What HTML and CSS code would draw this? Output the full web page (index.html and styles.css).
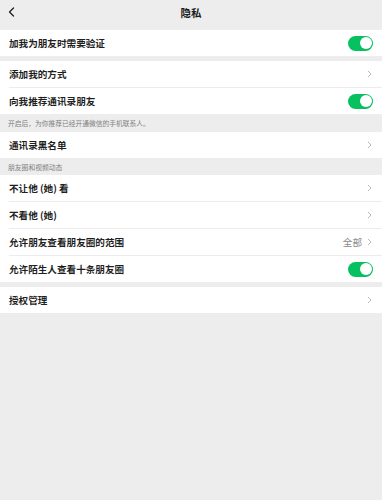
FILE: index.html
```html
<!DOCTYPE html>
<html lang="zh-CN">
<head>
<meta charset="utf-8">
<title>隐私</title>
<link rel="stylesheet" href="styles.css">
</head>
<body>
<header class="nav">
  <span class="back"><svg width="7" height="10" viewBox="0 0 7 10"><path d="M5.5 1 L1.5 5 L5.5 9" fill="none" stroke="#1a1a1a" stroke-width="1.2" stroke-linecap="round" stroke-linejoin="round"/></svg></span>
  <span class="title">隐私</span>
  <span></span>
</header>

<section class="group">
  <div class="row"><span class="label">加我为朋友时需要验证</span><span class="switch"><span class="knob"></span></span></div>
</section>

<div class="gap"></div>

<section class="group">
  <div class="row"><span class="label">添加我的方式</span><span class="chev"><svg width="5" height="8" viewBox="0 0 5 8"><path d="M1 1 L4 4 L1 7" fill="none" stroke="#b8b8b8" stroke-width="1"/></svg></span></div>
  <div class="row sep"><span class="label">向我推荐通讯录朋友</span><span class="switch"><span class="knob"></span></span></div>
</section>
<p class="note">开启后，为你推荐已经开通微信的手机联系人。</p>

<section class="group">
  <div class="row"><span class="label">通讯录黑名单</span><span class="chev"><svg width="5" height="8" viewBox="0 0 5 8"><path d="M1 1 L4 4 L1 7" fill="none" stroke="#b8b8b8" stroke-width="1"/></svg></span></div>
</section>
<p class="head">朋友圈和视频动态</p>

<section class="group">
  <div class="row"><span class="label">不让他 (她) 看</span><span class="chev"><svg width="5" height="8" viewBox="0 0 5 8"><path d="M1 1 L4 4 L1 7" fill="none" stroke="#b8b8b8" stroke-width="1"/></svg></span></div>
  <div class="row sep"><span class="label">不看他 (她)</span><span class="chev"><svg width="5" height="8" viewBox="0 0 5 8"><path d="M1 1 L4 4 L1 7" fill="none" stroke="#b8b8b8" stroke-width="1"/></svg></span></div>
  <div class="row sep"><span class="label">允许朋友查看朋友圈的范围</span><span class="right"><span class="value">全部</span><span class="chev"><svg width="5" height="8" viewBox="0 0 5 8"><path d="M1 1 L4 4 L1 7" fill="none" stroke="#b8b8b8" stroke-width="1"/></svg></span></span></div>
  <div class="row sep"><span class="label">允许陌生人查看十条朋友圈</span><span class="switch"><span class="knob"></span></span></div>
</section>

<div class="gap"></div>

<section class="group">
  <div class="row"><span class="label">授权管理</span><span class="chev"><svg width="5" height="8" viewBox="0 0 5 8"><path d="M1 1 L4 4 L1 7" fill="none" stroke="#b8b8b8" stroke-width="1"/></svg></span></div>
</section>
</body>
</html>
```

FILE: styles.css
```css
html, body {
  margin: 0;
  padding: 0;
  background: #ededed;
  font-family: "Noto Sans CJK SC", "Noto Sans", sans-serif;
  color: #1a1a1a;
}

.nav {
  height: 30px;
  display: grid;
  grid-template-columns: 1fr auto 1fr;
  align-items: center;
  padding-bottom: 6px;
  box-sizing: border-box;
}

.back {
  display: flex;
  padding-left: 8px;
}

.title {
  font-size: 10.5px;
  font-weight: 700;
}

.group {
  background: #fff;
}

.row {
  height: 26px;
  display: flex;
  align-items: center;
  justify-content: space-between;
  padding: 0 9px;
  position: relative;
}

.row.sep {
  margin-top: 1px;
}

.row.sep::before {
  content: "";
  position: absolute;
  top: -1px;
  left: 9px;
  right: 0;
  height: 1px;
  background: #ececec;
}

.label {
  font-size: 9.6px;
  font-weight: 700;
  color: #1f1f1f;
}

.right {
  display: flex;
  align-items: center;
  gap: 5px;
}

.value {
  font-size: 9.6px;
  color: #8a8a8a;
}

.chev {
  display: flex;
  padding-right: 1px;
}

.switch {
  width: 25px;
  height: 15px;
  border-radius: 8px;
  background: #07c160;
  display: flex;
  align-items: center;
  justify-content: flex-end;
  padding-right: 1.5px;
  box-sizing: border-box;
}

.knob {
  width: 12px;
  height: 12px;
  border-radius: 50%;
  background: #fff;
}

.gap {
  height: 5px;
}

.note {
  margin: 0;
  height: 18px;
  padding-left: 8px;
  display: flex;
  align-items: center;
  font-size: 6.75px;
  color: #7f7f7f;
}

.head {
  margin: 0;
  height: 17px;
  padding-left: 8px;
  display: flex;
  align-items: flex-end;
  padding-bottom: 3px;
  box-sizing: border-box;
  font-size: 6.8px;
  color: #7f7f7f;
}
```
